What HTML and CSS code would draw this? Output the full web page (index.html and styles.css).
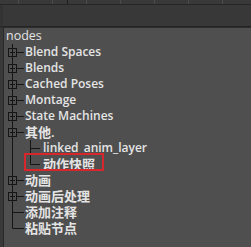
FILE: index.html
```html
<!DOCTYPE html>
<html>
<head>
  <meta charset="utf-8">
  <title>nodes</title>
  <link rel="stylesheet" href="styles.css">
</head>
<body>
  <div class="ruler"></div>
  <div class="header"></div>
  <div class="main">
    <div class="gutter"></div>
    <div class="panel">
      <div class="root">nodes</div>

      <div class="row">
        <svg class="twig" width="18" height="16"><path d="M6.5 0V16M10.5 8.5H18"/><rect x="2.5" y="4.5" width="8" height="8"/><path d="M4 8.5H9M6.5 6V11"/></svg>
        <span class="label">Blend Spaces</span>
      </div>
      <div class="row">
        <svg class="twig" width="18" height="16"><path d="M6.5 0V16M10.5 8.5H18"/><rect x="2.5" y="4.5" width="8" height="8"/><path d="M4 8.5H9M6.5 6V11"/></svg>
        <span class="label">Blends</span>
      </div>
      <div class="row">
        <svg class="twig" width="18" height="16"><path d="M6.5 0V16M10.5 8.5H18"/><rect x="2.5" y="4.5" width="8" height="8"/><path d="M4 8.5H9M6.5 6V11"/></svg>
        <span class="label">Cached Poses</span>
      </div>
      <div class="row">
        <svg class="twig" width="18" height="16"><path d="M6.5 0V16M10.5 8.5H18"/><rect x="2.5" y="4.5" width="8" height="8"/><path d="M4 8.5H9M6.5 6V11"/></svg>
        <span class="label">Montage</span>
      </div>
      <div class="row">
        <svg class="twig" width="18" height="16"><path d="M6.5 0V16M10.5 8.5H18"/><rect x="2.5" y="4.5" width="8" height="8"/><path d="M4 8.5H9M6.5 6V11"/></svg>
        <span class="label">State Machines</span>
      </div>
      <div class="row">
        <svg class="twig" width="18" height="16"><path d="M6.5 0V16M10.5 8.5H18"/><rect x="2.5" y="4.5" width="8" height="8"/><path d="M4 8.5H9"/></svg>
        <span class="label cjk">其他.</span>
      </div>
      <div class="row">
        <svg class="twig" width="36" height="16"><path d="M6.5 0V16M24.5 0V16M24.5 8.5H34"/></svg>
        <span class="label">linked_anim_layer</span>
      </div>
      <div class="row">
        <svg class="twig" width="36" height="16"><path d="M6.5 0V16M24.5 0V8.5H34"/></svg>
        <span class="label cjk">动作快照</span>
        <div class="mark"></div>
      </div>
      <div class="row">
        <svg class="twig" width="18" height="16"><path d="M6.5 0V16M10.5 8.5H18"/><rect x="2.5" y="4.5" width="8" height="8"/><path d="M4 8.5H9M6.5 6V11"/></svg>
        <span class="label cjk">动画</span>
      </div>
      <div class="row">
        <svg class="twig" width="18" height="16"><path d="M6.5 0V16M10.5 8.5H18"/><rect x="2.5" y="4.5" width="8" height="8"/><path d="M4 8.5H9M6.5 6V11"/></svg>
        <span class="label cjk">动画后处理</span>
      </div>
      <div class="row">
        <svg class="twig" width="18" height="16"><path d="M6.5 0V16M6.5 8.5H18"/></svg>
        <span class="label cjk">添加注释</span>
      </div>
      <div class="row">
        <svg class="twig" width="18" height="16"><path d="M6.5 0V8.5H18"/></svg>
        <span class="label cjk">粘贴节点</span>
      </div>
    </div>
  </div>
</body>
</html>
```

FILE: styles.css
```css
html, body {
  margin: 0;
  height: 100%;
}
body {
  display: flex;
  flex-direction: column;
  background: #4f4f4f;
  overflow: hidden;
  font-family: "Open Sans", "Noto Sans CJK SC", sans-serif;
  font-size: 13px;
  color: #e4e4e4;
}

/* strip of ticks across the very top */
.ruler {
  height: 4px;
  background-color: #393939;
  background-image: repeating-linear-gradient(90deg, transparent 0 18px, #4a4a4a 18px 19px, transparent 19px 34px),
                    repeating-linear-gradient(90deg, transparent 0 67px, #1c1c1c 67px 68px, transparent 68px 195px);
  border-bottom: 1px solid #262626;
}
.header {
  height: 21px;
  background: #383838;
  border-left: 3px solid #333;
  border-bottom: 1px solid #242424;
  box-shadow: 0 1px 0 #2e2e2e;
}

.main {
  flex: 1;
  display: flex;
  margin-top: 1px;
}
.gutter {
  width: 3px;
  background: #393939;
  border-right: 1px solid #2a2a2a;
}
.panel {
  flex: 1;
  padding-left: 2px;
}

.root {
  height: 16px;
  line-height: 16px;
  font-size: 12.5px;
}
.row {
  display: flex;
  align-items: center;
  height: 16px;
  position: relative;
}
.twig {
  flex: none;
  height: 16px;
}
.twig path, .twig rect {
  fill: none;
  stroke: #151515;
  stroke-width: 1;
}
.label {
  padding-left: 1px;
  font-size: 12px;
  font-weight: 600;
  line-height: 16px;
  white-space: nowrap;
}
.label.cjk {
  font-size: 13px;
}

/* red annotation box */
.mark {
  position: absolute;
  left: 18px;
  top: -3px;
  width: 76px;
  height: 14px;
  border: 2px solid #d8262d;
}
```
